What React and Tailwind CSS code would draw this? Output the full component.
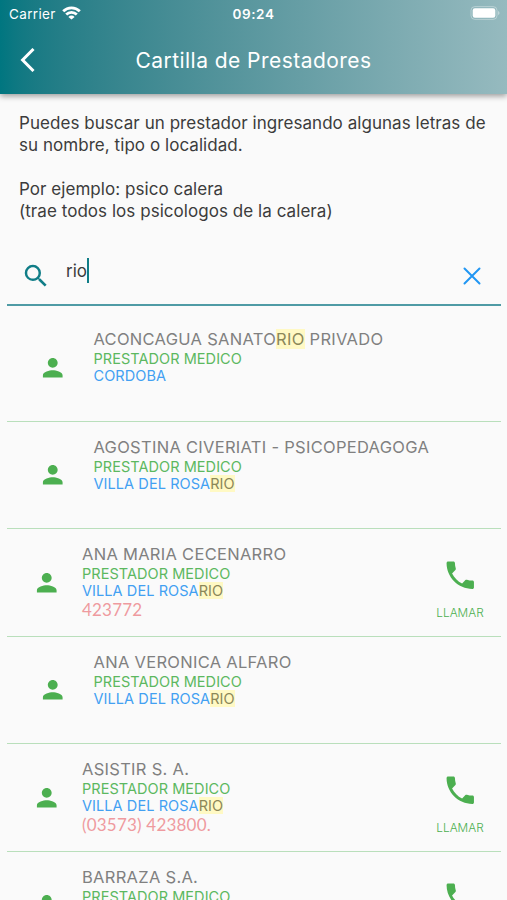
import React from 'react';
import { MdPerson, MdPhone, MdSearch } from 'react-icons/md';

const providers = [
  { name: 'ACONCAGUA SANATORIO PRIVADO', city: 'CORDOBA' },
  { name: 'AGOSTINA CIVERIATI - PSICOPEDAGOGA', city: 'VILLA DEL ROSARIO' },
  { name: 'ANA MARIA CECENARRO', city: 'VILLA DEL ROSARIO', phone: '423772' },
  { name: 'ANA VERONICA ALFARO', city: 'VILLA DEL ROSARIO' },
  { name: 'ASISTIR S. A.', city: 'VILLA DEL ROSARIO', phone: '(03573) 423800.' },
  { name: 'BARRAZA S.A.', hasCall: true },
];

// Marks the searched letters inside a text
const Highlight = ({ text, query }) => {
  const start = text.indexOf(query.toUpperCase());
  if (start < 0) return text;
  const end = start + query.length;
  return (
    <>
      {text.slice(0, start)}
      <mark className="bg-[#fff9c4] text-[#8b8759]">{text.slice(start, end)}</mark>
      {text.slice(end)}
    </>
  );
};

const StatusBar = () => (
  <div className="grid h-7 grid-cols-3 items-center pl-[9px] pr-[7px] text-[13.5px] leading-7">
    <div className="flex items-center gap-[6px]">
      <span className="tracking-[0.35px]">Carrier</span>
      <svg className="-mt-0.5 h-[14px] w-[19px]" viewBox="0 0 19 14" fill="none" stroke="currentColor" strokeWidth="2.8">
        <path d="M1.2 5.2a11.8 11.8 0 0 1 16.6 0" />
        <path d="M4.2 8.6a7.6 7.6 0 0 1 10.6 0" />
        <path d="M9.5 13.6 6.4 10.9a4.4 4.4 0 0 1 6.2 0z" fill="currentColor" stroke="none" />
      </svg>
    </div>
    <div className="-ml-0.5 text-center font-semibold tracking-[0.6px]">09:24</div>
    <svg className="-mt-0.5 h-[14px] w-[30px] justify-self-end" viewBox="0 0 30 14">
      <rect x="1" y="0.6" width="26" height="12.8" rx="3.8" fill="none" stroke="#fff" strokeOpacity="0.35" />
      <rect x="2.7" y="2.3" width="22.6" height="9.4" rx="2.2" fill="#fff" />
      <path d="M28 5v4q1.6-.6 1.6-2t-1.6-2z" fill="#fff" fillOpacity="0.4" />
    </svg>
  </div>
);

const ProviderRow = ({ provider }) => {
  const canCall = provider.phone || provider.hasCall;

  return (
    <li className="flex h-[107.5px] border-b border-[#b9dfbb]">
      <div className={canCall ? 'w-[75px] pl-[25px] pt-[38.5px]' : 'w-[86.5px] pl-[31px] pt-[38.5px]'}>
        <MdPerson className="size-[29.5px] text-[#4caf50]" />
      </div>
      <div className="flex-1 whitespace-nowrap pt-[15px]">
        <div className="text-[16.5px] leading-5 tracking-[0.29px] text-[#808080]">
          <Highlight text={provider.name} query="rio" />
        </div>
        <div className="pt-[0.75px] text-[14.5px] leading-[17px] tracking-[0.05px] text-[#5cb860]">PRESTADOR MEDICO</div>
        {provider.city && (
          <div className="text-[14.5px] leading-[17px] tracking-[0.08px] text-[#42a0f2]">
            <Highlight text={provider.city} query="rio" />
          </div>
        )}
        {provider.phone && (
          <div className="font-['Lato',sans-serif] text-[17px] leading-[21px] tracking-[0.2px] text-[#ef9a9f]">{provider.phone}</div>
        )}
      </div>
      {canCall && (
        <div className="flex w-[82px] flex-col items-center pt-[27.5px] text-[#4caf50]">
          <MdPhone className="size-[36.5px]" />
          {provider.phone && <span className="mt-3 text-[11.8px] font-light leading-4">LLAMAR</span>}
        </div>
      )}
    </li>
  );
};

const App = () => {
  return (
    <div className="h-[900px] overflow-hidden bg-[#fafafa] font-['Inter',sans-serif]">
      {/* Header */}
      <header className="relative h-[94px] bg-linear-to-r from-[#007680] to-[#96babf] text-white shadow-[0_2px_6px_rgba(0,0,0,0.4)]">
        <StatusBar />
        <div className="grid h-[64px] grid-cols-[60px_1fr_60px] items-center">
          <svg className="ml-5 h-6 w-4" viewBox="0 0 16 24" fill="none" stroke="currentColor" strokeWidth="3">
            <path d="M13.5 1 2.6 12l10.9 11" />
          </svg>
          <h1 className="pt-0.5 text-center text-[21px] tracking-[0.45px]">Cartilla de Prestadores</h1>
        </div>
      </header>

      {/* Help text */}
      <p className="whitespace-pre-line pl-[19px] pt-[18px] text-[17px] leading-[22px] tracking-[0.05px] text-[#3c3c3c]">
        {`Puedes buscar un prestador ingresando algunas letras de
        su nombre, tipo o localidad.

        Por ejemplo: psico calera
        (trae todos los psicologos de la calera)`}
      </p>

      {/* Search field */}
      <div className="ml-[7px] mr-[6px] mt-[22px] flex h-[62px] border-b-2 border-[#4f9ba5]">
        <MdSearch className="ml-[14px] mt-[16.5px] size-[30px] text-[#107d87]" />
        <div className="ml-[15px] mt-[14px] flex flex-1 text-[17px] leading-[26px] text-[#3c3c3c]">
          <span>rio</span>
          <span className="h-[25px] w-[2.5px] bg-[#107d87]" />
        </div>
        <svg className="mr-[20.5px] mt-[22.5px] size-[18px] text-[#2196f3]" viewBox="0 0 18 18" stroke="currentColor" strokeWidth="2" strokeLinecap="round">
          <path d="m1.5 1.5 15 15m0-15-15 15" />
        </svg>
      </div>

      {/* Results */}
      <ul className="ml-[7px] mr-[6px] pt-[8.25px]">
        {providers.map((provider) => (
          <ProviderRow key={provider.name} provider={provider} />
        ))}
      </ul>
    </div>
  );
};

export default App;
